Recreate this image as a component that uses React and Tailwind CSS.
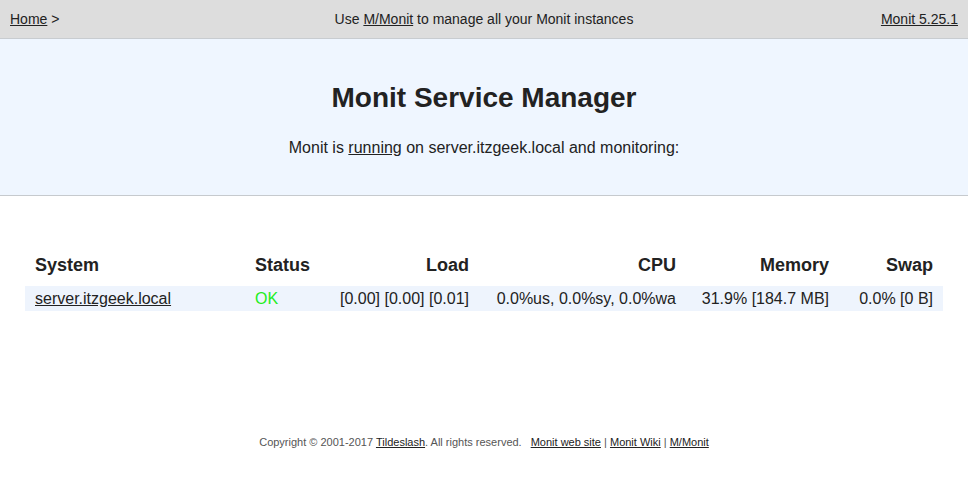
export default function App() {
  const cols = 'grid grid-cols-[220px_80px_154px_207px_153px_104px] whitespace-nowrap';
  return (
    <div className="min-h-[482px] bg-white text-[#222] font-['Liberation_Sans',Arial,sans-serif]">
      {/* Top bar */}
      <div className="h-[39px] bg-[#dddddd] border-b border-[#c8ccd0] flex items-center justify-between px-[10px] text-[14px] text-[#222]">
        <div className="w-[200px]">
          <a href="#" className="underline">Home</a> &gt;
        </div>
        <div>
          Use <a href="#" className="underline">M/Monit</a> to manage all your Monit instances
        </div>
        <div className="w-[200px] text-right">
          <a href="#" className="underline">Monit 5.25.1</a>
        </div>
      </div>

      {/* Hero */}
      <div className="h-[157px] bg-[#eff6ff] border-b border-[#c6cace] flex flex-col items-center">
        <h1 className="mt-[43px] text-[28px] font-bold leading-[32px] text-[#222]">Monit Service Manager</h1>
        <p className="mt-[24px] text-[16px] leading-[20px] text-[#222]">
          Monit is <a href="#" className="underline">running</a> on server.itzgeek.local and monitoring:
        </p>
      </div>

      {/* Table */}
      <div className="mt-[56px] mx-[25px] w-[918px]">
        <div className={`${cols} h-[26px] items-center text-[18px] font-bold text-[#222]`}>
          <div className="px-[10px]">System</div>
          <div className="px-[10px]">Status</div>
          <div className="px-[10px] text-right">Load</div>
          <div className="px-[10px] text-right">CPU</div>
          <div className="px-[10px] text-right">Memory</div>
          <div className="px-[10px] text-right">Swap</div>
        </div>
        <div className={`${cols} mt-[8px] h-[25px] items-center bg-[#eef4fd] text-[16px] text-[#222]`}>
          <div className="px-[10px]"><a href="#" className="underline">server.itzgeek.local</a></div>
          <div className="px-[10px] text-[#22ee22]">OK</div>
          <div className="px-[10px] text-right">[0.00] [0.00] [0.01]</div>
          <div className="px-[10px] text-right">0.0%us, 0.0%sy, 0.0%wa</div>
          <div className="px-[10px] text-right">31.9% [184.7 MB]</div>
          <div className="px-[10px] text-right">0.0% [0 B]</div>
        </div>
      </div>

      {/* Footer */}
      <div className="mt-[123px] text-center text-[11px] text-[#555]">
        Copyright © 2001-2017 <a href="#" className="underline text-[#222]">Tildeslash</a>. All rights reserved.
        <span className="ml-[9px]">
          <a href="#" className="underline text-[#222]">Monit web site</a> | <a href="#" className="underline text-[#222]">Monit Wiki</a> | <a href="#" className="underline text-[#222]">M/Monit</a>
        </span>
      </div>
    </div>
  );
}
